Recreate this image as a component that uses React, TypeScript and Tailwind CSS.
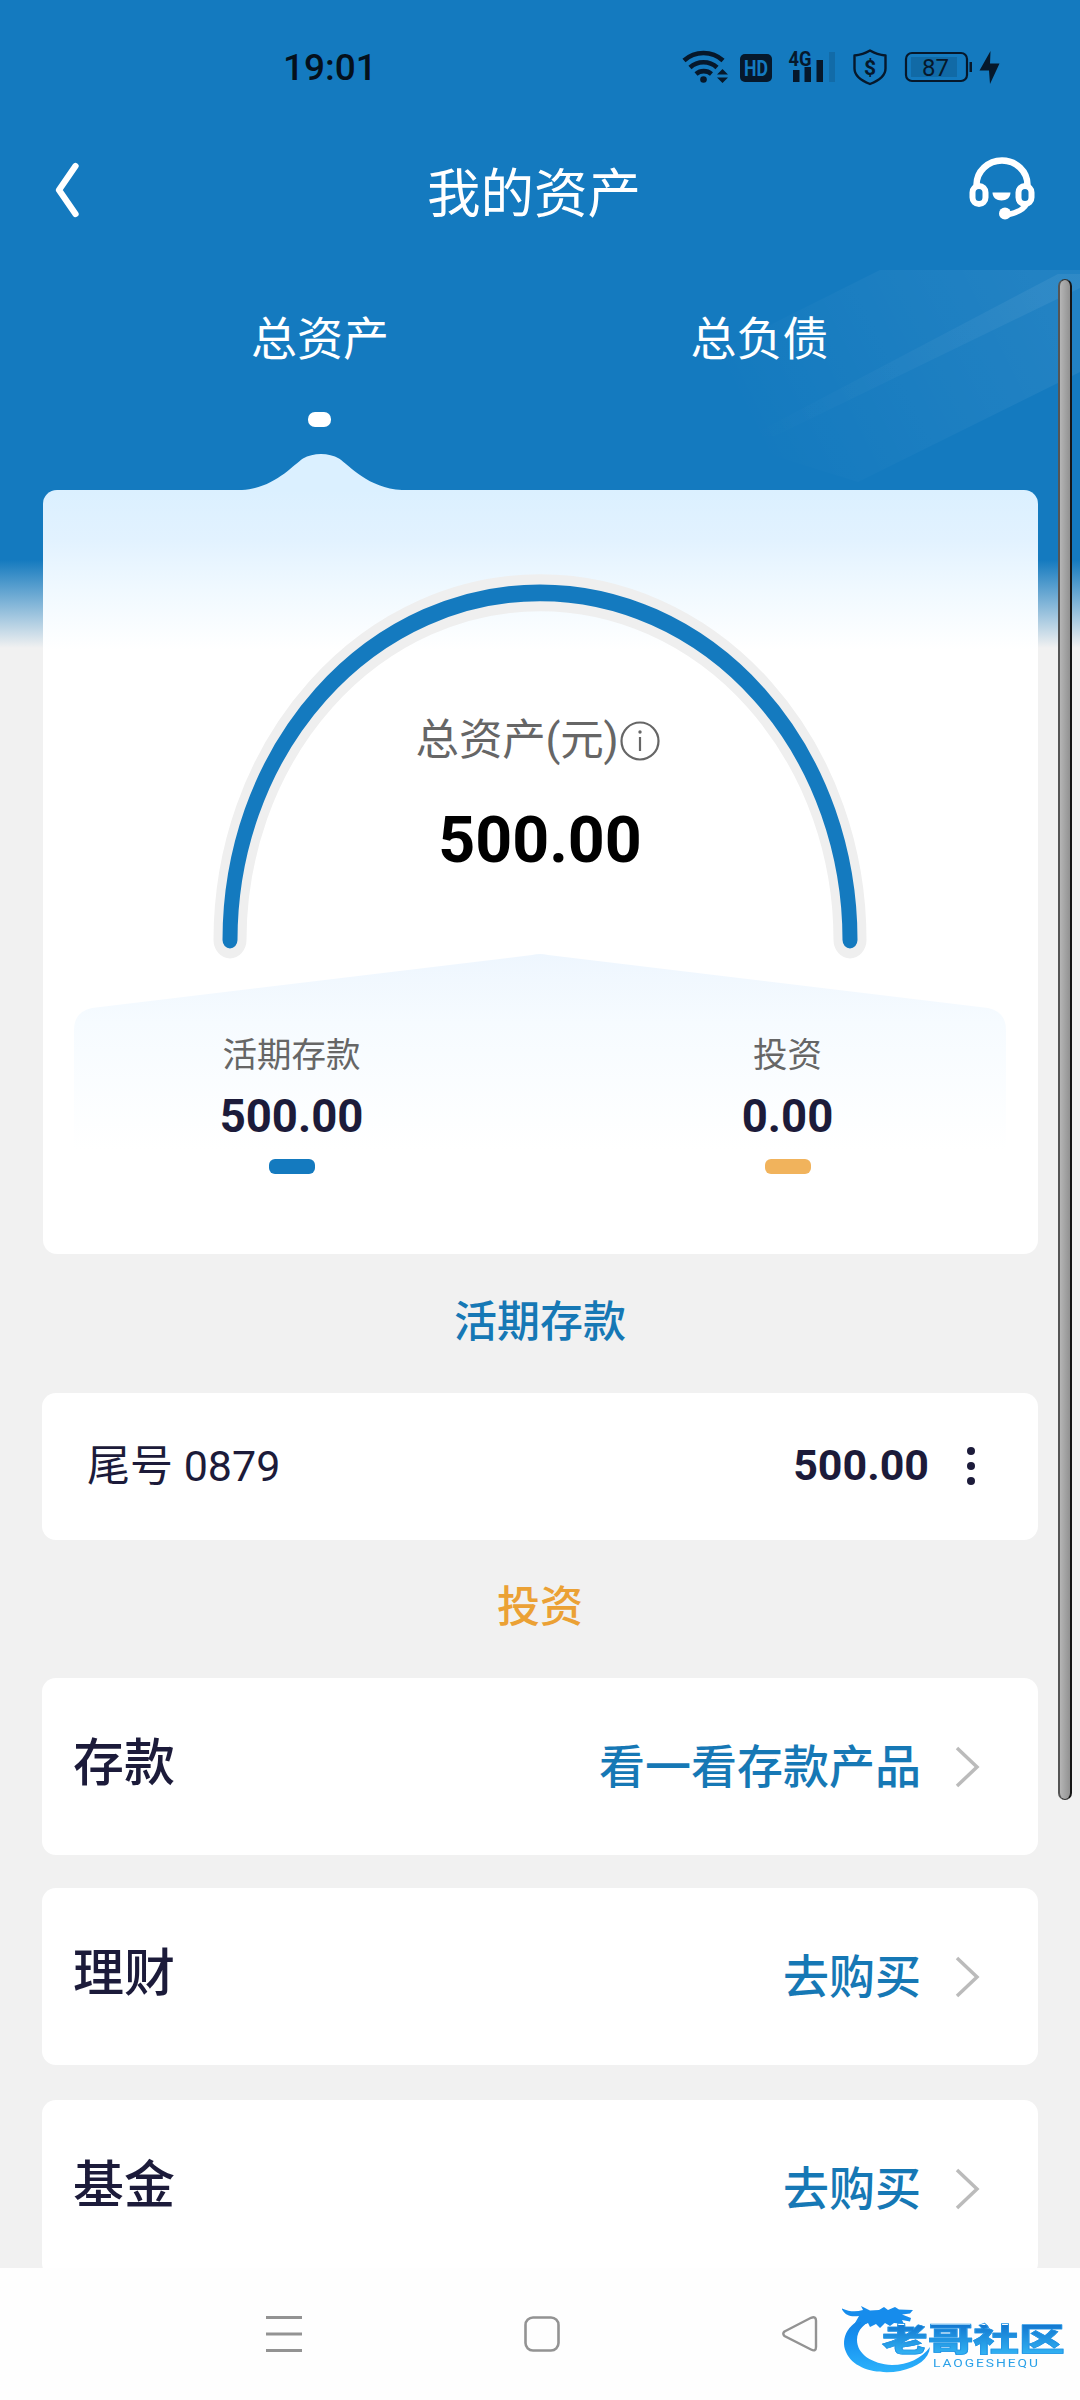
import React from "react";

interface Product {
  name: string;
  action: string;
  spacing: string;
}

const products: Product[] = [
  { name: "存款", action: "看一看存款产品", spacing: "mb-[33px]" },
  { name: "理财", action: "去购买", spacing: "mb-[35px]" },
  { name: "基金", action: "去购买", spacing: "" },
];

const StatusBar = () => (
  <div className="flex h-[130px] items-start text-[#06182b]">
    <span className="ml-[283px] mt-[47px] w-[399px] text-[37px] leading-[42px] font-medium text-[#04101c]">
      19:01
    </span>
    <svg className="mt-[42px] h-[50px] w-[340px]" viewBox="682 42 340 50">
      {/* wifi */}
      <g fill="none" stroke="currentColor" strokeWidth="4.6">
        <path d="M684 60.5a29 29 0 0 1 39 0" />
        <path d="M690 67.5a20 20 0 0 1 27 0" />
        <path d="M696 74a12 12 0 0 1 15.500 0" />
      </g>
      <circle cx="703.500" cy="79.500" r="3.300" fill="currentColor" />
      <path d="M717 74.500l5.500-5.500 5.500 5.500zM717 77.500l5.500 5.500 5.500-5.500z" fill="currentColor" />
      {/* HD */}
      <rect x="740" y="54" width="32" height="28" rx="5" fill="currentColor" />
      <text x="744" y="76" fill="#147abf" fontSize="22" fontWeight="700" textLength="24" lengthAdjust="spacingAndGlyphs">
        HD
      </text>
      {/* signal */}
      <text x="788.500" y="65.500" fill="currentColor" fontSize="21" fontWeight="700" textLength="23" lengthAdjust="spacingAndGlyphs">
        4G
      </text>
      <path d="M793 70h6.500v12H793zM804.500 67h6.500v15h-6.500zM816.500 60h6.500v22h-6.500z" fill="currentColor" />
      <rect x="829" y="52" width="6" height="30" fill="#126ba8" />
      {/* shield */}
      <path
        d="M870 50.500c5 3 10 4.500 15.500 5v13c0 7-6.500 12-15.500 15.500-9-3.500-15.500-8.500-15.500-15.500v-13c5.500-.5 10.500-2 15.500-5z"
        fill="none"
        stroke="currentColor"
        strokeWidth="2.400"
        strokeLinejoin="round"
      />
      <text x="870" y="74.500" fill="currentColor" fontSize="21" fontWeight="700" textAnchor="middle">
        $
      </text>
      {/* battery */}
      <rect x="911" y="57" width="46" height="20" fill="#116aa6" />
      <rect x="906" y="53" width="61" height="28" rx="6" fill="none" stroke="currentColor" strokeWidth="2.200" />
      <rect x="969.500" y="62" width="2.500" height="10" fill="currentColor" />
      <text x="935.500" y="76" fill="currentColor" fontSize="24" textAnchor="middle">
        87
      </text>
      <path d="M990.500 51l-11 19.500h9.500l1 13.500 9.500-20.500h-9.500z" fill="currentColor" />
    </svg>
  </div>
);

const TitleBar = () => (
  <div className="flex h-[126px] items-center justify-between pr-[45px] pl-[55px] text-white">
    <svg className="mb-[6px] h-[56px] w-[25px]" viewBox="0 0 25 56">
      <path d="M20.500 4L4 28l16.500 24" fill="none" stroke="currentColor" strokeWidth="6.300" strokeLinecap="round" strokeLinejoin="round" />
    </svg>
    <h1 className="mt-[3px] ml-[19px] text-[53.500px] leading-[70px] font-normal">我的资产</h1>
    <svg className="mb-[9px] h-[66px] w-[66px]" viewBox="0 0 66 66" fill="none" stroke="currentColor">
      <path d="M7.500 32v-3a25 24 0 0 1 51 0v3" strokeWidth="6.500" />
      <rect x="3.500" y="30" width="13" height="18" rx="6.500" strokeWidth="6" />
      <rect x="49.500" y="30" width="13" height="18" rx="6.500" strokeWidth="6" />
      <path d="M57.500 48c-2.500 5-9 8.500-18 10.500" strokeWidth="5.500" />
      <circle cx="36" cy="57.500" r="6" fill="currentColor" stroke="none" />
      <path d="M23.500 36.500h18c0 5-4 8-9 8s-9-3-9-8z" fill="currentColor" stroke="none" />
    </svg>
  </div>
);

const Tabs = () => (
  <div className="flex h-[234px] pl-[101px] text-[46px] leading-[60px] text-white">
    <div className="flex w-[438px] flex-col items-center pt-[53px]">
      <span>总资产</span>
      <span className="mt-[43px] mr-[2px] h-[15px] w-[23px] rounded-[7px] bg-white" />
    </div>
    <div className="flex w-[441px] flex-col items-center pt-[53px]">
      <span>总负债</span>
    </div>
  </div>
);

const Breakdown = ({
  label,
  amount,
  bar,
  className,
}: {
  label: string;
  amount: string;
  bar: string;
  className: string;
}) => (
  <div className={`flex flex-col items-center ${className}`}>
    <span className="text-[34.500px] leading-[48px] text-[#666]">{label}</span>
    <span className="mt-[11px] text-[45.500px] leading-[54px] font-bold text-[#1c1b3a]">{amount}</span>
    <span className={`mt-[15px] h-[15px] w-[46px] rounded-[6px] ${bar}`} />
  </div>
);

const SummaryCard = () => (
  <section className="relative mr-[42px] ml-[43px] h-[764px] shrink-0 rounded-[14px] bg-[linear-gradient(to_bottom,#dbf0ff_0px,#e2f2ff_50px,#f0f9ff_100px,#ffffff_160px)]">
    {/* bump under the active tab */}
    <svg className="absolute -top-[36px] left-[199px] h-[37px] w-[160px]" viewBox="0 0 160 37">
      <path d="M0 37V36C32 34 50 12 61 4.500C71-1.500 87-1.500 97 4.500C108 12 126 34 160 36V37z" fill="#dbf0ff" />
    </svg>
    {/* gauge and the tinted panel below it */}
    <svg className="absolute inset-0 h-[764px] w-[995px]" viewBox="43 490 995 764" fill="none">
      <defs>
        <linearGradient id="panel" x1="0" y1="954" x2="0" y2="1150" gradientUnits="userSpaceOnUse">
          <stop offset="0" stopColor="#eef6fe" />
          <stop offset="0.350" stopColor="#f6fbff" />
          <stop offset="1" stopColor="#ffffff" />
        </linearGradient>
      </defs>
      <path d="M532 955Q540 953 548 955L988 1008Q1006 1012 1006 1030V1150H74V1030Q74 1012 92 1008z" fill="url(#panel)" />
      <g transform="translate(540 940) scale(1 1.120)" strokeLinecap="round">
        <path d="M-310 0A310 310 0 0 1 310 0" stroke="#efefef" strokeWidth="33" />
        <path d="M-310 0A310 310 0 0 1 310 0" stroke="#147abf" strokeWidth="15" />
      </g>
    </svg>

    <div className="relative flex flex-col items-center pt-[223px]">
      <div className="mr-[4px] flex items-center text-[43.500px] leading-[56px] text-[#666]">
        <span className="tracking-[-0.200px]">总资产(元)</span>
        <svg className="ml-[1px] h-[42px] w-[42px]" viewBox="0 0 42 42" fill="none" stroke="currentColor" strokeWidth="2.200">
          <circle cx="21" cy="21" r="18.500" />
          <path d="M21 17v14" />
          <circle cx="21" cy="12" r="1.700" fill="currentColor" stroke="none" />
        </svg>
      </div>
      <div className="mt-[33px] mr-[1px] text-[64.500px] leading-[76px] font-bold text-black">500.00</div>
    </div>
    <div className="relative mt-[153px] flex">
      <Breakdown label="活期存款" amount="500.00" bar="bg-[#147abf]" className="w-[497px]" />
      <Breakdown label="投资" amount="0.00" bar="bg-[#f1b35c]" className="w-[495px]" />
    </div>
  </section>
);

const AccountRow = () => (
  <section className="mx-[42px] flex h-[147px] shrink-0 items-center rounded-[14px] bg-white pr-[63px] pl-[45px] text-[#1c1b3a]">
    <span className="text-[43px]">尾号 0879</span>
    <span className="mb-[2px] ml-auto text-[43px] font-bold">500.00</span>
    <span className="mb-[2px] ml-[38px] flex w-[8px] flex-col gap-[7px]">
      <i className="size-[8px] rounded-full bg-current" />
      <i className="size-[8px] rounded-full bg-current" />
      <i className="size-[8px] rounded-full bg-current" />
    </span>
  </section>
);

const ProductRow = ({ name, action, spacing }: Product) => (
  <section className={`mx-[42px] flex h-[177px] shrink-0 items-center rounded-[14px] bg-white pr-[56px] pl-[31px] ${spacing}`}>
    <span className="mb-[6px] text-[51px] leading-[70px] font-medium text-[#1c1b3a]">{name}</span>
    <span className="mt-[1px] ml-auto text-[46px] leading-[60px] font-medium text-[#1678b5]">{action}</span>
    <svg className="mr-[1px] ml-[32px] h-[44px] w-[28px]" viewBox="0 0 28 44">
      <path d="M4 3l20 19L4 41" fill="none" stroke="#bbb" strokeWidth="3.500" />
    </svg>
  </section>
);

const Watermark = () => (
  <div className="absolute top-[22px] right-[6px] h-[90px] w-[234px]">
    <svg className="absolute inset-0 h-[90px] w-[234px]" viewBox="840 2290 234 90">
      <defs>
        <linearGradient id="dragon" x1="0" y1="0" x2="0" y2="1">
          <stop offset="0" stopColor="#1480e0" />
          <stop offset="0.400" stopColor="#168ff0" />
          <stop offset="1" stopColor="#2bb2fb" />
        </linearGradient>
      </defs>
      {/* tapering ring */}
      <path
        d="M872 2315C848 2321 840 2338 846 2352C853 2369 878 2375 900 2371C918 2367 929 2359 930 2347C922 2358 908 2365 892 2365C872 2364 857 2354 857 2340C857 2330 864 2322 878 2319z"
        fill="url(#dragon)"
      />
      {/* head and whiskers */}
      <path
        d="M842 2308.500c8 3.500 14 3.500 21 1.500l-2-4 9 4.500 9-.5 5-3 4 3 7-3 4 2.500 14 .5-3 3.500-8 1 9 3.500-1 3.500-8-1.500 2 4-10-1-4 3-5-3-5 5-4-4-6 3-2-4-8 3 1-4-6 1 4-7c-8 1-13 0-17-6.500z"
        fill="#168cec"
      />
    </svg>
    <div className="absolute top-[35px] left-[42px] origin-left scale-x-[1.450] bg-linear-to-b from-[#1478d0] to-[#35b8f6] bg-clip-text text-[31.500px] leading-[32px] font-black whitespace-nowrap text-transparent [-webkit-text-stroke:0.700px_#2394e4]">
      老哥社区
    </div>
    <div className="absolute top-[67px] left-[93px] origin-left scale-x-[1.200] text-[11.500px] leading-[12px] tracking-[1.600px] text-[#2ba1e8]">
      LAOGESHEQU
    </div>
  </div>
);

const SystemNav = () => (
  <footer className="relative flex h-[132px] shrink-0 bg-[#fefefe] pt-[47px] pl-[265px]">
    <svg className="h-[38px] w-[554px]" viewBox="265 2315 554 38" fill="none" stroke="#939393" strokeWidth="3">
      <path d="M266 2317.500h36M266 2334h36M266 2350.500h36" />
      <rect x="525.500" y="2317.500" width="33" height="33" rx="7.500" strokeWidth="2.600" />
      <path d="M784.500 2331.500L811 2317.800Q816 2316 816 2320.500V2347Q816 2352 811 2349.500L784.500 2336Q782 2333.800 784.500 2331.500z" strokeWidth="2.400" />
    </svg>
    <Watermark />
  </footer>
);

const App = () => (
  <div className="relative flex h-[2400px] w-[1080px] flex-col overflow-hidden bg-[linear-gradient(to_bottom,#147abf_0px,#147abf_560px,#f1f1f1_648px)] font-['Roboto','Noto_Sans_CJK_SC',sans-serif]">
    {/* light rays behind the tabs */}
    <svg className="absolute top-[260px] right-0 h-[230px] w-[480px]" viewBox="600 260 480 230">
      <defs>
        <linearGradient id="ray" x1="700" y1="337" x2="990" y2="192" gradientUnits="userSpaceOnUse">
          <stop offset="0" stopColor="#fff" stopOpacity="0" />
          <stop offset="1" stopColor="#fff" stopOpacity="0.060" />
        </linearGradient>
      </defs>
      <path d="M610 405L880 270H1080V372L858 482z" fill="url(#ray)" />
      <path d="M750 436L1058 274H1080V288L775 436z" fill="url(#ray)" />
    </svg>

    <header className="relative shrink-0">
      <StatusBar />
      <TitleBar />
      <Tabs />
    </header>

    <main className="flex h-[1778px] shrink-0 flex-col">
      <SummaryCard />
      <h2 className="mt-[38px] mb-[41px] shrink-0 text-center text-[43px] leading-[60px] font-medium text-[#1678b5]">活期存款</h2>
      <AccountRow />
      <h2 className="mt-[37px] mb-[41px] shrink-0 text-center text-[43px] leading-[60px] font-medium text-[#eba135]">投资</h2>
      {products.map((p) => (
        <ProductRow key={p.name} {...p} />
      ))}
    </main>

    <SystemNav />

    {/* scroll thumb */}
    <div className="absolute top-[279px] right-[8px] h-[1521px] w-[14px] rounded-[7px] border-x-2 border-y border-[#333] border-l-[#555] border-r-[#151515] bg-linear-to-r from-[#b5b5b5] to-[#929292]" />
  </div>
);

export default App;
